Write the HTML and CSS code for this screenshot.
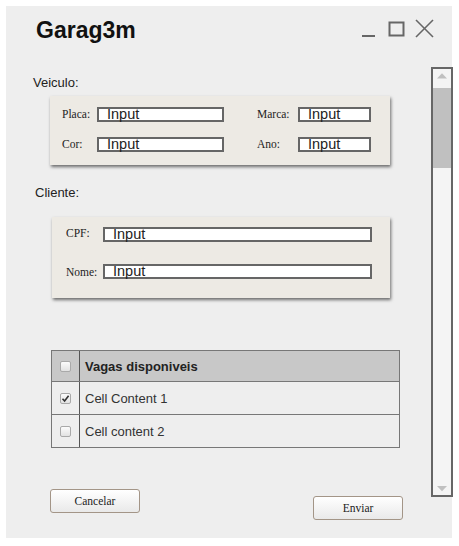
FILE: index.html
```html
<!DOCTYPE html>
<html>
<head>
<meta charset="utf-8">
<link rel="stylesheet" href="styles.css">
</head>
<body>
<div class="window">
  <div class="header">
    <div class="title">Garag3m</div>
    <svg class="controls" width="74" height="20" viewBox="0 0 74 20">
      <line x1="2" y1="17" x2="15" y2="17" stroke="#666" stroke-width="2"/>
      <rect x="29.5" y="3.5" width="14" height="13" fill="none" stroke="#666" stroke-width="2"/>
      <line x1="56" y1="1" x2="73" y2="18" stroke="#666" stroke-width="1.6"/>
      <line x1="73" y1="1" x2="56" y2="18" stroke="#666" stroke-width="1.6"/>
    </svg>
  </div>
  <div class="body">
    <div class="main">
      <div class="section-label veiculo">Veiculo:</div>
      <div class="card card-veiculo">
        <div class="flabel">Placa:</div>
        <div class="input w-placa">Input</div>
        <div class="spacer"></div>
        <div class="flabel">Marca:</div>
        <div class="input w-marca">Input</div>
        <div class="flabel">Cor:</div>
        <div class="input w-placa">Input</div>
        <div class="spacer"></div>
        <div class="flabel">Ano:</div>
        <div class="input w-marca">Input</div>
      </div>
      <div class="section-label cliente">Cliente:</div>
      <div class="card card-cliente">
        <div class="flabel top">CPF:</div>
        <div class="input w-long">Input</div>
        <div class="flabel bottom">Nome:</div>
        <div class="input w-long">Input</div>
      </div>
      <div class="table">
        <div class="row head">
          <div class="cell check"><span class="cb"></span></div>
          <div class="cell text">Vagas disponiveis</div>
        </div>
        <div class="row">
          <div class="cell check"><span class="cb checked"><svg width="9" height="9" viewBox="0 0 9 9"><path d="M1.5 4.8 L3.6 7 L7.6 1.8" fill="none" stroke="#333" stroke-width="1.6"/></svg></span></div>
          <div class="cell text">Cell Content 1</div>
        </div>
        <div class="row">
          <div class="cell check"><span class="cb"></span></div>
          <div class="cell text">Cell content 2</div>
        </div>
      </div>
      <div class="buttons">
        <button class="btn">Cancelar</button>
        <button class="btn enviar">Enviar</button>
      </div>
    </div>
    <div class="scrollbar">
      <svg class="arrow-up" width="18" height="19" viewBox="0 0 18 19"><polygon points="4,9.5 14,9.5 9,4.2" fill="#c0c0c0"/></svg>
      <div class="thumb"></div>
      <div class="track"></div>
      <svg class="arrow-down" width="18" height="10" viewBox="0 0 18 10"><polygon points="4,1 14,1 9,6.2" fill="#c0c0c0"/></svg>
    </div>
  </div>
</div>
</body>
</html>
```
FILE: styles.css
```css
html, body {
  margin: 0;
  padding: 0;
  background: #ffffff;
}
.window {
  margin: 6px 0 0 6px;
  width: 446px;
  height: 532px;
  background: #eeeeee;
  display: flex;
  flex-direction: column;
}
.header {
  height: 55px;
  box-sizing: border-box;
  padding: 11px 18px 0 30px;
  display: flex;
  justify-content: space-between;
  align-items: flex-start;
}
.title {
  font-family: "Liberation Sans", Arial, sans-serif;
  font-weight: bold;
  font-size: 23px;
  line-height: 26px;
  color: #111;
}
.controls {
  margin-top: 2px;
  display: block;
}
.body {
  flex: 1;
  display: flex;
  min-height: 0;
}
.main {
  flex: 1;
  display: flex;
  flex-direction: column;
  align-items: flex-start;
}
.section-label {
  font-family: "Liberation Sans", Arial, sans-serif;
  font-size: 13px;
  line-height: 15px;
  color: #222;
}
.veiculo {
  margin: 14px 0 0 27px;
}
.cliente {
  margin: 20px 0 0 29px;
}
.card {
  background: #edeae4;
  box-shadow: 1px 2px 3px rgba(0, 0, 0, 0.55);
  box-sizing: border-box;
  display: grid;
}
.card-veiculo {
  margin: 6px 0 0 44px;
  width: 340px;
  height: 69px;
  padding: 11px 0 0 12px;
  grid-template-columns: 35px 127px 33px 41px 73px;
  grid-template-rows: 15px 15px;
  row-gap: 15px;
}
.card-cliente {
  margin: 17px 0 0 46px;
  width: 338px;
  height: 81px;
  padding: 10px 0 0 14px;
  grid-template-columns: 37px 269px;
  grid-template-rows: 15px 15px;
  row-gap: 22px;
}
.flabel {
  font-family: "Liberation Serif", "Times New Roman", serif;
  font-size: 11.5px;
  line-height: 13px;
  color: #222;
  align-self: center;
  white-space: nowrap;
}
.flabel.top {
  align-self: start;
}
.flabel.bottom {
  align-self: end;
}
.input {
  box-sizing: border-box;
  height: 15px;
  border: 2px solid #666;
  background: #fff;
  font-family: "Liberation Sans", Arial, sans-serif;
  font-size: 14.5px;
  line-height: 11px;
  padding-left: 8px;
  color: #222;
  overflow: visible;
  white-space: nowrap;
}
.w-placa { width: 127px; }
.w-marca { width: 73px; }
.w-long { width: 269px; }
.table {
  margin: 52px 0 0 45px;
  width: 349px;
  box-sizing: border-box;
  border: 1px solid #777;
  border-bottom: none;
  font-family: "Liberation Sans", Arial, sans-serif;
  font-size: 13px;
  color: #333;
}
.row {
  display: grid;
  grid-template-columns: 28px 1fr;
  height: 33px;
  border-bottom: 1px solid #777;
  box-sizing: border-box;
}
.row.head {
  height: 31px;
  background: #c8c8c8;
  font-weight: bold;
  color: #222;
}
.cell {
  display: flex;
  align-items: center;
}
.cell.check {
  justify-content: center;
  border-right: 1px solid #555;
}
.cell.text {
  padding-left: 5px;
}
.cb {
  width: 11px;
  height: 11px;
  box-sizing: border-box;
  border: 1px solid #a9a9a9;
  border-radius: 2px;
  background: linear-gradient(#fcfcfc, #e2e2e2);
  display: flex;
  align-items: center;
  justify-content: center;
}
.cb svg {
  display: block;
}
.buttons {
  margin: 41px 0 0 44px;
  width: 353px;
  display: flex;
  justify-content: space-between;
  align-items: flex-start;
}
.btn {
  width: 90px;
  height: 24px;
  box-sizing: border-box;
  border: 1px solid #a39587;
  border-radius: 3px;
  background: linear-gradient(#ffffff, #e9e9e9);
  font-family: "Liberation Serif", "Times New Roman", serif;
  font-size: 11.5px;
  color: #222;
  padding: 0;
  margin: 0;
}
.btn.enviar {
  margin-top: 7px;
}
.scrollbar {
  width: 22px;
  height: 430px;
  margin: 6px -1px 0 0;
  box-sizing: border-box;
  border: 2px solid #666;
  background: #f4f4f4;
  display: flex;
  flex-direction: column;
}
.scrollbar svg {
  display: block;
  flex: none;
}
.thumb {
  height: 80px;
  background: #c0c0c0;
  flex: none;
}
.track {
  flex: 1;
}
```
